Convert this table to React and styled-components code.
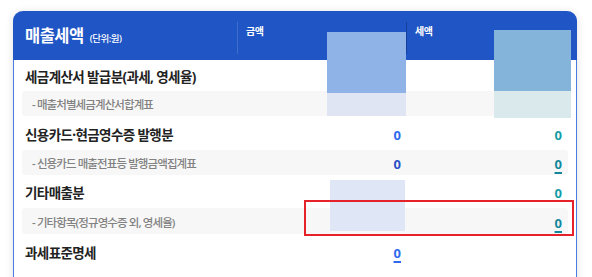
import React from "react";
import styled, { createGlobalStyle } from "styled-components";

const Global = createGlobalStyle`
  html, body { margin: 0; padding: 0; background: #ffffff; }
  body {
    font-family: "Noto Sans", "Noto Sans CJK KR", sans-serif;
    -webkit-font-smoothing: antialiased;
  }
  * { box-sizing: border-box; }
`;

const Page = styled.div`
  position: relative;
  width: 592px;
  height: 277px;
  overflow: hidden;
  padding: 11px 15px 0 13px;
`;

const Card = styled.section`
  background: #fff;
  border: 1px solid #4a7ddf;
  border-top: none;
  border-radius: 10px 10px 0 0;
  box-shadow: 0 1px 8px rgba(0, 0, 0, 0.12);
  height: 300px;
`;

const Header = styled.div`
  display: grid;
  grid-template-columns: 224px 169px 1fr;
  height: 49px;
  margin: 0 -1px;
  background: #1f55c4;
  border-radius: 10px 10px 0 0;
  color: #fff;
`;

const TitleCell = styled.div`
  display: flex;
  align-items: baseline;
  padding: 15px 0 0 12px;
  gap: 6px;
`;

const Title = styled.h2`
  margin: 0;
  font-size: 16.5px;
  font-weight: 700;
  letter-spacing: -0.5px;
  line-height: 20px;
`;

const Unit = styled.span`
  font-size: 9.5px;
  font-weight: 500;
  letter-spacing: -0.5px;
`;

const ColHead = styled.div`
  margin: 11px 0 6px;
  border-left: 1px solid ${(p) => p.$line};
  padding: 2px 0 0 8px;
  font-size: 10px;
  font-weight: 700;
  letter-spacing: -0.5px;
  line-height: 14px;
`;

const Body = styled.div`
  padding: 0 8px 0 8px;
`;

const Row = styled.div`
  display: grid;
  grid-template-columns: 216px 169px 1fr;
  align-items: center;
  height: ${(p) => p.$h}px;
  padding-top: 3px;
  border-radius: 3px;
  background: ${(p) => (p.$sub ? "#f7f7f7" : "transparent")};
`;

const Label = styled.div`
  padding-left: ${(p) => (p.$sub ? 10 : 3)}px;
  font-size: ${(p) => (p.$sub ? 11.5 : 13.5)}px;
  font-weight: ${(p) => (p.$sub ? 500 : 700)};
  color: ${(p) => (p.$sub ? "#828282" : "#222")};
  letter-spacing: ${(p) => (p.$sub ? -0.9 : -0.6)}px;
  white-space: nowrap;
  line-height: 18px;
`;

const Dot = styled.span`
  font-family: "Noto Sans", sans-serif;
`;

const Value = styled.div`
  text-align: right;
  padding-right: 6px;
  font-size: 13px;
  font-weight: 700;
  line-height: 18px;
  color: ${(p) => p.$color};
  span {
    text-decoration: ${(p) => (p.$link ? "underline" : "none")};
    text-underline-offset: 3px;
    text-decoration-thickness: 1.5px;
  }
`;

const Mask = styled.div`
  position: absolute;
  background: ${(p) => p.$bg};
`;

const Highlight = styled.div`
  position: absolute;
  left: 304px;
  top: 200px;
  width: 270px;
  height: 36px;
  border: 2px solid #e5212a;
`;

const BLUE = "#3069ee";
const BLUE_D = "#2a52c6";
const TEAL = "#149ca6";
const TEAL_D = "#13879c";

const rows = [
  { label: "세금계산서 발급분(과세, 영세율)", h: 31 },
  { label: "- 매출처별세금계산서합계표", sub: true, h: 25 },
  {
    label: (
      <>
        신용카드<Dot>·</Dot>현금영수증 발행분
      </>
    ),
    h: 34,
    a: { c: BLUE },
    t: { c: TEAL },
  },
  { label: "- 신용카드 매출전표등 발행금액집계표", sub: true, h: 25, a: { c: BLUE_D }, t: { c: TEAL_D, link: true } },
  { label: "기타매출분", h: 33, t: { c: TEAL } },
  { label: "- 기타항목(정규영수증 외, 영세율)", sub: true, h: 26, t: { c: TEAL_D, link: true } },
  { label: "과세표준명세", h: 35, a: { c: BLUE, link: true } },
];

export default function App() {
  return (
    <>
      <Global />
      <Page>
        <Card>
          <Header>
            <TitleCell>
              <Title>매출세액</Title>
              <Unit>(단위:원)</Unit>
            </TitleCell>
            <ColHead $line="rgba(255,255,255,0.14)">금액</ColHead>
            <ColHead $line="#163f9c">세액</ColHead>
          </Header>
          <Body>
            {rows.map((r, i) => (
              <Row key={i} $sub={r.sub} $h={r.h}>
                <Label $sub={r.sub}>{r.label}</Label>
                <Value $color={r.a ? r.a.c : "#000"} $link={r.a && r.a.link}>
                  {r.a ? <span>0</span> : null}
                </Value>
                <Value $color={r.t ? r.t.c : "#000"} $link={r.t && r.t.link}>
                  {r.t ? <span>0</span> : null}
                </Value>
              </Row>
            ))}
          </Body>
        </Card>
        <Mask $bg="#8fb3e6" style={{ left: 327, top: 32, width: 79, height: 61 }} />
        <Mask $bg="#dfe5f2" style={{ left: 327, top: 93, width: 79, height: 23 }} />
        <Mask $bg="#85b4da" style={{ left: 494, top: 30, width: 77, height: 61 }} />
        <Mask $bg="#dae9ec" style={{ left: 494, top: 91, width: 77, height: 27 }} />
        <Mask $bg="#dfe6f6" style={{ left: 330, top: 180, width: 75, height: 51 }} />
        <Highlight />
      </Page>
    </>
  );
}
